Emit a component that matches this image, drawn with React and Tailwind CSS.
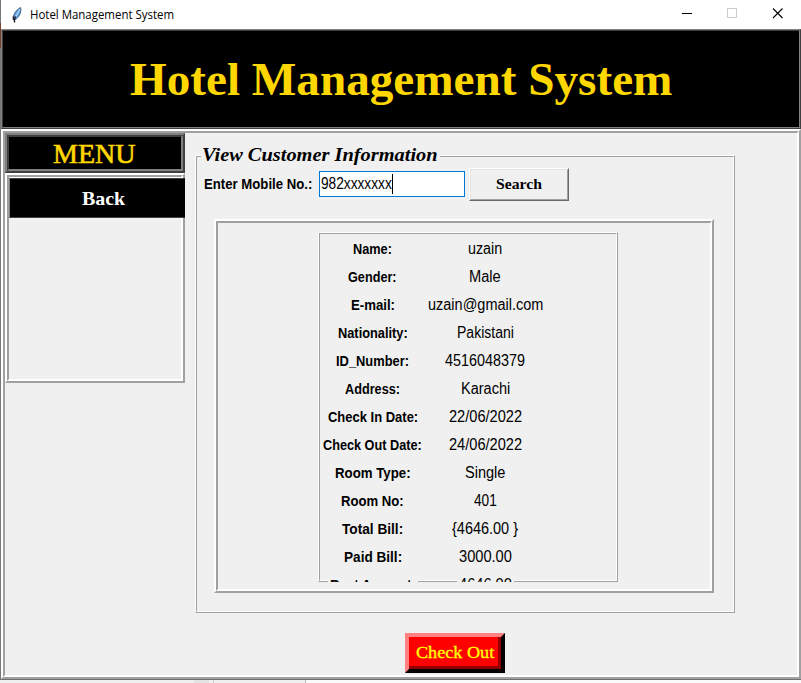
import { useLayoutEffect, useRef, useState } from "react";

const SANS = "font-['Liberation_Sans',Arial,sans-serif]";
const SERIF = "font-['Liberation_Serif','Times_New_Roman',serif]";

// Condenses or widens one line of text so that it fills a given width.
function Fit({ width, className = "", children }) {
  const ref = useRef(null);
  const [scale, setScale] = useState(1);
  useLayoutEffect(() => {
    setScale(width / ref.current.offsetWidth);
  }, [width]);
  return (
    <span className="flex shrink-0 justify-start overflow-visible" style={{ width }}>
      <span
        ref={ref}
        className={`block shrink-0 origin-left whitespace-pre ${className}`}
        style={{ transform: `scaleX(${scale})` }}
      >
        {children}
      </span>
    </span>
  );
}

// Four pixel raised border: white over grey, mirrored at the far edges.
function Ridge({ className = "", children }) {
  return (
    <div className={`border-2 border-t-white border-l-white border-r-[#a0a0a0] border-b-[#a0a0a0] ${className}`}>
      <div className="h-full w-full border-2 border-t-[#a0a0a0] border-l-[#a0a0a0] border-r-white border-b-white">
        {children}
      </div>
    </div>
  );
}

function ThinRidge({ className = "", children }) {
  return (
    <div className={`border border-t-white border-l-white border-r-[#a0a0a0] border-b-[#a0a0a0] ${className}`}>
      <div className="h-full w-full border border-t-[#a0a0a0] border-l-[#a0a0a0] border-r-white border-b-white">
        {children}
      </div>
    </div>
  );
}

const rows = [
  ["Name:", 39, "uzain", 34],
  ["Gender:", 49, "Male", 32],
  ["E-mail:", 44, "uzain@gmail.com", 115],
  ["Nationality:", 70, "Pakistani", 57],
  ["ID_Number:", 73, "4516048379", 80],
  ["Address:", 55, "Karachi", 49],
  ["Check In Date:", 90, "22/06/2022", 73],
  ["Check Out Date:", 99, "24/06/2022", 73],
  ["Room Type:", 76, "Single", 40],
  ["Room No:", 63, "401", 23],
  ["Total Bill:", 61, "{4646.00 }", 66],
  ["Paid Bill:", 58, "3000.00", 53],
  ["Rest Amount:", 86, "4646.00", 53],
];

function Feather() {
  return (
    <svg className="h-4 w-3" viewBox="0 0 12 16">
      <path d="M2.500 13C1.500 9 4 3.500 9.500 0.500C10.500 3.500 9.500 9 4.500 12.500Z" fill="#5b9be0" stroke="#2a4a70" strokeWidth="0.8" />
      <path d="M8.500 2C8.300 4 6.500 7 4.500 9.500" fill="none" stroke="#b5d8f7" strokeWidth="1.300" />
      <path d="M4.500 9.500L3.500 12L3.500 15.500" fill="none" stroke="#111" strokeWidth="1.300" />
      <path d="M2.300 9V13" fill="none" stroke="#222" strokeWidth="1" />
    </svg>
  );
}

function TitleBar() {
  return (
    <div className="flex h-[29px] items-center bg-white pl-[10px]">
      <Feather />
      <div className="ml-[7px] flex-1 font-['Open_Sans','Noto_Sans',sans-serif] text-[12px] leading-4 text-black">
        <Fit width={144}>Hotel Management System</Fit>
      </div>
      <svg className="h-[29px] w-[121px]" viewBox="0 0 121 29" shapeRendering="crispEdges">
        <path d="M2 13.500H12" stroke="#000" />
        <rect x="47.500" y="8.500" width="9" height="9" fill="none" stroke="#ccc" />
        <path d="M93 8.500L102.500 18M102.500 8.500L93 18" stroke="#000" strokeWidth="1.100" shapeRendering="auto" />
      </svg>
    </div>
  );
}

function Sidebar() {
  return (
    <div className="w-[180px] shrink-0">
      <div className="h-10 border-2 border-t-[#808080] border-l-[#808080] border-r-[#404040] border-b-[#404040]">
        <div className={`flex h-full items-center justify-center border-2 border-t-[#404040] border-l-[#404040] border-r-[#808080] border-b-[#808080] bg-black pt-[3px] pr-[2px] text-[27px] leading-none text-[#ffd700] [-webkit-text-stroke:0.6px_#ffd700] ${SERIF}`}>
          <Fit width={83}>MENU</Fit>
        </div>
      </div>
      <Ridge className="h-[210px]">
        <div className="h-px bg-white" />
        <div className={`-mr-1 flex h-10 items-center border border-t-[#404040] border-l-[#808080] border-r-black border-b-[#404040] bg-black pl-[72px] text-[19px] font-bold leading-none text-white ${SERIF}`}>
          <Fit width={43}>Back</Fit>
        </div>
      </Ridge>
    </div>
  );
}

function Details() {
  return (
    <Ridge className="mt-[18px] ml-[17px] h-[374px] w-[500px]">
      <div className="flex justify-start pt-[9px] pl-[100px]">
        <ThinRidge className="h-[350px] w-[300px]">
          <div className={`h-[348px] overflow-hidden pt-px text-black ${SANS}`}>
            {rows.map(([label, lw, value, vw], i) => {
              const last = i === rows.length - 1;
              return (
                <div key={label} className="flex h-7 items-center">
                  <div className="flex w-[105px] shrink-0 justify-center">
                    <div className={last ? "bg-[#f0f0f0] px-[2px]" : ""}>
                      <Fit width={lw} className="text-[15px] font-bold leading-[26px]">{label}</Fit>
                    </div>
                  </div>
                  <div className="flex w-[120px] shrink-0 justify-center">
                    <div className={last ? "bg-[#f0f0f0] px-[2px]" : ""}>
                      <Fit width={vw} className="text-[16px] leading-[26px]">{value}</Fit>
                    </div>
                  </div>
                </div>
              );
            })}
          </div>
        </ThinRidge>
      </div>
    </Ridge>
  );
}

function CustomerPanel() {
  return (
    <div className="ml-[10px] w-[540px]">
      <div className="h-[22px]" />
      <ThinRidge className="h-[458px]">
        <div className={`-mt-[15px] ml-[4px] flex h-[25px] w-[239px] items-center bg-[#f0f0f0] pl-px text-[19px] font-bold italic leading-none text-black ${SERIF}`}>
          <Fit width={236}>View Customer Information</Fit>
        </div>
        <div className="flex h-[34px] items-center pl-[7px]">
          <Fit width={108} className={`text-[15px] font-bold text-black ${SANS}`}>Enter Mobile No.:</Fit>
          <div className={`ml-[7px] flex h-[26px] w-[146px] items-center border border-[#0078d7] bg-white pl-px text-[16px] text-black ${SANS}`}>
            <Fit width={71}>982xxxxxxx</Fit>
            <div className="h-5 w-px bg-black" />
          </div>
          <div className="ml-1 h-[33px] w-[100px] border border-t-white border-l-white border-r-[#696969] border-b-[#696969]">
            <div className={`flex h-full items-center justify-center border border-t-[#e3e3e3] border-l-[#e3e3e3] border-r-[#a0a0a0] border-b-[#a0a0a0] pt-px text-[15px] font-bold text-black ${SERIF}`}>
              <Fit width={46}>Search</Fit>
            </div>
          </div>
        </div>
        <Details />
      </ThinRidge>
    </div>
  );
}

export default function App() {
  return (
    <div className="flex h-[683px] w-[801px] overflow-hidden bg-[#f0f0f0]">
      <div className="flex h-[680px] w-px shrink-0 flex-col bg-[#777]">
        <div className="mt-[23px] h-[25px] bg-[#793e2d]" />
      </div>
      <div className="w-[800px]">
        <TitleBar />
        <div className="h-[100px] border border-t-[#808080] border-l-[#808080] border-r-[#404040] border-b-[#404040]">
          <div className={`flex h-full items-center justify-center border border-t-[#404040] border-l-[#404040] border-r-[#808080] border-b-[#808080] bg-black pt-px text-[47px] font-bold leading-none text-[#ffd700] ${SERIF}`}>
            <Fit width={542}>Hotel Management System</Fit>
          </div>
        </div>
        <Ridge className="h-[550px]">
          <div className="flex">
            <Sidebar />
            <CustomerPanel />
          </div>
          <div className="mt-5 ml-[400px] h-10 w-[100px] border-4 border-t-[#ff8080] border-l-[#ff8080] border-r-black border-b-black">
            <div className={`flex h-full items-center border-r-[3px] border-b-[3px] border-[#900000] bg-[#ff0000] pt-[2px] pl-[7px] text-[17px] leading-none text-[#ffff00] [-webkit-text-stroke:0.35px_#ffff00] ${SERIF}`}>
              <Fit width={78}>Check Out</Fit>
            </div>
          </div>
        </Ridge>
        <div className="h-px bg-[#707070]" />
        <div className="flex h-[3px] bg-[#f0f0f0]">
          <div className="ml-[193px] w-[15px] bg-[#e3e3e3]" />
          <div className="ml-1 w-px bg-[#ccc]" />
          <div className="ml-[91px] w-px bg-[#bbb]" />
          <div className="flex-1 bg-[#fafafa]" />
        </div>
      </div>
    </div>
  );
}
